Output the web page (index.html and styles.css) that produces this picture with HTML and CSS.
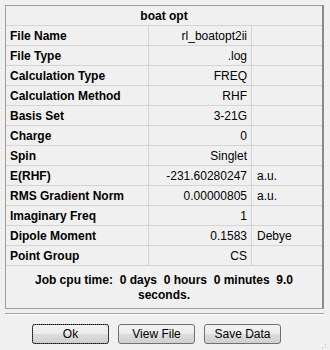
FILE: index.html
```html
<!DOCTYPE html>
<html lang="en">
<head>
    <meta charset="UTF-8">
    <title>boat opt</title>
    <link rel="stylesheet" href="styles.css">
</head>
<body>
    <div class="dialog">
        <div class="panel">
            <table class="summary">
                <tr><th class="title" colspan="3">boat opt</th></tr>
                <tr><td class="label">File Name</td><td class="value">rl_boatopt2ii</td><td class="unit"></td></tr>
                <tr><td class="label">File Type</td><td class="value">.log</td><td class="unit"></td></tr>
                <tr><td class="label">Calculation Type</td><td class="value">FREQ</td><td class="unit"></td></tr>
                <tr><td class="label">Calculation Method</td><td class="value">RHF</td><td class="unit"></td></tr>
                <tr><td class="label">Basis Set</td><td class="value">3-21G</td><td class="unit"></td></tr>
                <tr><td class="label">Charge</td><td class="value">0</td><td class="unit"></td></tr>
                <tr><td class="label">Spin</td><td class="value">Singlet</td><td class="unit"></td></tr>
                <tr><td class="label">E(RHF)</td><td class="value">-231.60280247</td><td class="unit">a.u.</td></tr>
                <tr><td class="label">RMS Gradient Norm</td><td class="value">0.00000805</td><td class="unit">a.u.</td></tr>
                <tr><td class="label">Imaginary Freq</td><td class="value">1</td><td class="unit"></td></tr>
                <tr><td class="label">Dipole Moment</td><td class="value">0.1583</td><td class="unit">Debye</td></tr>
                <tr><td class="label">Point Group</td><td class="value">CS</td><td class="unit"></td></tr>
            </table>
            <div class="cpu-time">Job cpu time:&nbsp; 0 days&nbsp; 0 hours&nbsp; 0 minutes&nbsp; 9.0<br>seconds.</div>
        </div>

        <div class="separator"></div>

        <div class="buttons">
            <button class="btn focused">Ok</button>
            <button class="btn">View File</button>
            <button class="btn">Save Data</button>
        </div>

        <!-- уголок для ресайза -->
        <svg class="grip" width="12" height="12" viewBox="0 0 12 12">
            <rect x="9" y="3" width="1" height="1" fill="#b8b8b8"/>
            <rect x="6" y="6" width="1" height="1" fill="#b8b8b8"/>
            <rect x="9" y="6" width="1" height="1" fill="#b8b8b8"/>
            <rect x="3" y="9" width="1" height="1" fill="#b8b8b8"/>
            <rect x="6" y="9" width="1" height="1" fill="#b8b8b8"/>
            <rect x="9" y="9" width="1" height="1" fill="#b8b8b8"/>
        </svg>
    </div>
</body>
</html>
```

FILE: styles.css
```css
body {
    margin: 0;
    padding: 0;
    background-color: #f0f0f0;
    font-family: 'Liberation Sans', Arial, sans-serif;
    font-size: 12px;
    color: #000;
}

.dialog {
    width: 330px;
    height: 350px;
    position: relative;
}

/* Рамка с таблицей */
.panel {
    margin: 5px 6px 0 5px;
    height: 302px;
    border-top: 1px solid #a0a0a0;
    border-left: 1px solid #a0a0a0;
    border-right: 2px solid #8a8a8a;
    border-bottom: 1px solid #a0a0a0;
}

.summary {
    width: 100%;
    border-collapse: collapse;
}

.summary th,
.summary td {
    height: 19px;
    padding: 0 4px;
    border-bottom: 1px solid #d4d4d4;
    white-space: nowrap;
}

.summary .title {
    font-weight: bold;
    text-align: center;
}

.summary .label {
    width: 134px;
    font-weight: bold;
    border-right: 1px solid #d4d4d4;
}

.summary .value {
    width: 94px;
    text-align: right;
    border-right: 1px solid #d4d4d4;
}

.summary .unit {
    padding-left: 5px;
}

.cpu-time {
    text-align: center;
    font-weight: bold;
    line-height: 15px;
    padding-top: 7px;
}

.separator {
    margin: 4px 6px 0 5px;
    border-top: 1px solid #a0a0a0;
    border-bottom: 1px solid #fff;
}

/* Кнопки */
.buttons {
    display: flex;
    gap: 9px;
    padding: 9px 0 0 32px;
}

.btn {
    width: 77px;
    height: 20px;
    padding: 0;
    font-family: 'Liberation Sans', Arial, sans-serif;
    font-size: 12px;
    color: #000;
    border: 1px solid #707070;
    border-radius: 3px;
    background: linear-gradient(to bottom, #f2f2f2 0%, #ebebeb 50%, #dddddd 51%, #cfcfcf 100%);
}

.btn.focused {
    outline: 1px dotted #000;
    outline-offset: -1px;
}

.grip {
    position: absolute;
    right: 2px;
    bottom: 2px;
}
```
